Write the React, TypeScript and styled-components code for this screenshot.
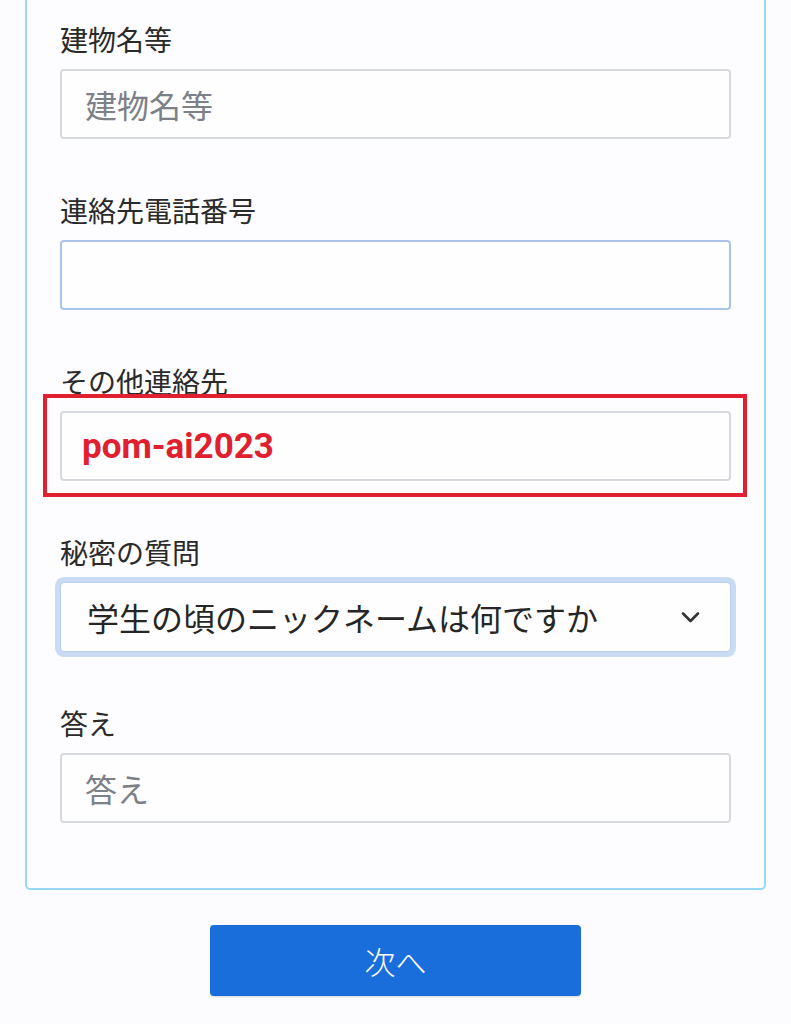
import React from 'react';
import styled, { createGlobalStyle } from 'styled-components';

const GlobalStyle = createGlobalStyle`
  html, body {
    margin: 0;
    padding: 0;
    background: #fcfbfd;
  }
  body {
    font-family: "Noto Sans CJK JP", "Noto Sans", sans-serif;
    color: #2b2b2b;
  }
`;

const Page = styled.div`
  width: 791px;
  margin-top: -20px;
`;

const Card = styled.div`
  margin: 0 25px;
  border: 2px solid #98d8f7;
  border-radius: 5px;
  padding: 39px 33px 65px 33px;
  background: #fdfcfe;
`;

const Field = styled.div`
  display: flex;
  flex-direction: column;
  position: relative;
  & + & {
    margin-top: 53px;
  }
`;

const Label = styled.label`
  font-size: 28px;
  line-height: 36px;
  margin-bottom: 12px;
  color: #2a2a2a;
`;

const Input = styled.div<{ $focused?: boolean }>`
  box-sizing: border-box;
  height: 70px;
  border: 2px solid ${p => (p.$focused ? '#a8c4ec' : '#d6d9dd')};
  border-radius: 4px;
  background: #fefefe;
  display: flex;
  align-items: center;
  padding: 0 23px;
  font-size: 32px;
  color: #7c8087;
`;

const RedValue = styled.span`
  font-family: Roboto, "Liberation Sans", sans-serif;
  font-weight: 700;
  font-size: 35px;
  color: #e0202e;
  margin-left: -3px;
`;

const Highlight = styled.div`
  position: absolute;
  left: -17px;
  right: -16px;
  top: 31px;
  height: 103px;
  border: 4px solid #e0202e;
  box-sizing: border-box;
  pointer-events: none;
`;

const Select = styled.div`
  box-sizing: border-box;
  height: 70px;
  border: 1px solid #b9cfee;
  border-radius: 4px;
  background: #fefefe;
  box-shadow: 0 0 0 5px #c9dcf3;
  display: flex;
  align-items: center;
  justify-content: space-between;
  padding: 0 30px 0 26px;
  font-size: 32px;
  color: #262626;
`;

const Footer = styled.div`
  display: flex;
  justify-content: center;
  padding: 35px 0 40px;
`;

const NextButton = styled.button`
  width: 371px;
  height: 71px;
  border: none;
  border-radius: 4px;
  background: #1a6edb;
  color: #fff;
  font-family: "Noto Sans CJK JP", sans-serif;
  font-size: 31px;
  font-weight: 300;
  box-shadow: 0 1px 2px rgba(0, 0, 0, 0.15);
`;

const Chevron = () => (
  <svg width="19" height="12" viewBox="0 0 19 12" fill="none">
    <path d="M2 2.5 L9.5 10 L17 2.5" stroke="#333" strokeWidth="2.6" strokeLinecap="round" strokeLinejoin="round" />
  </svg>
);

const App: React.FC = () => (
  <Page>
    <GlobalStyle />
    <Card>
      <Field>
        <Label>建物名等</Label>
        <Input>建物名等</Input>
      </Field>
      <Field>
        <Label>連絡先電話番号</Label>
        <Input $focused />
      </Field>
      <Field>
        <Label>その他連絡先</Label>
        <Input>
          <RedValue>pom-ai2023</RedValue>
        </Input>
        <Highlight />
      </Field>
      <Field>
        <Label>秘密の質問</Label>
        <Select>
          <span>学生の頃のニックネームは何ですか</span>
          <Chevron />
        </Select>
      </Field>
      <Field>
        <Label>答え</Label>
        <Input>答え</Input>
      </Field>
    </Card>
    <Footer>
      <NextButton>次へ</NextButton>
    </Footer>
  </Page>
);

export default App;
